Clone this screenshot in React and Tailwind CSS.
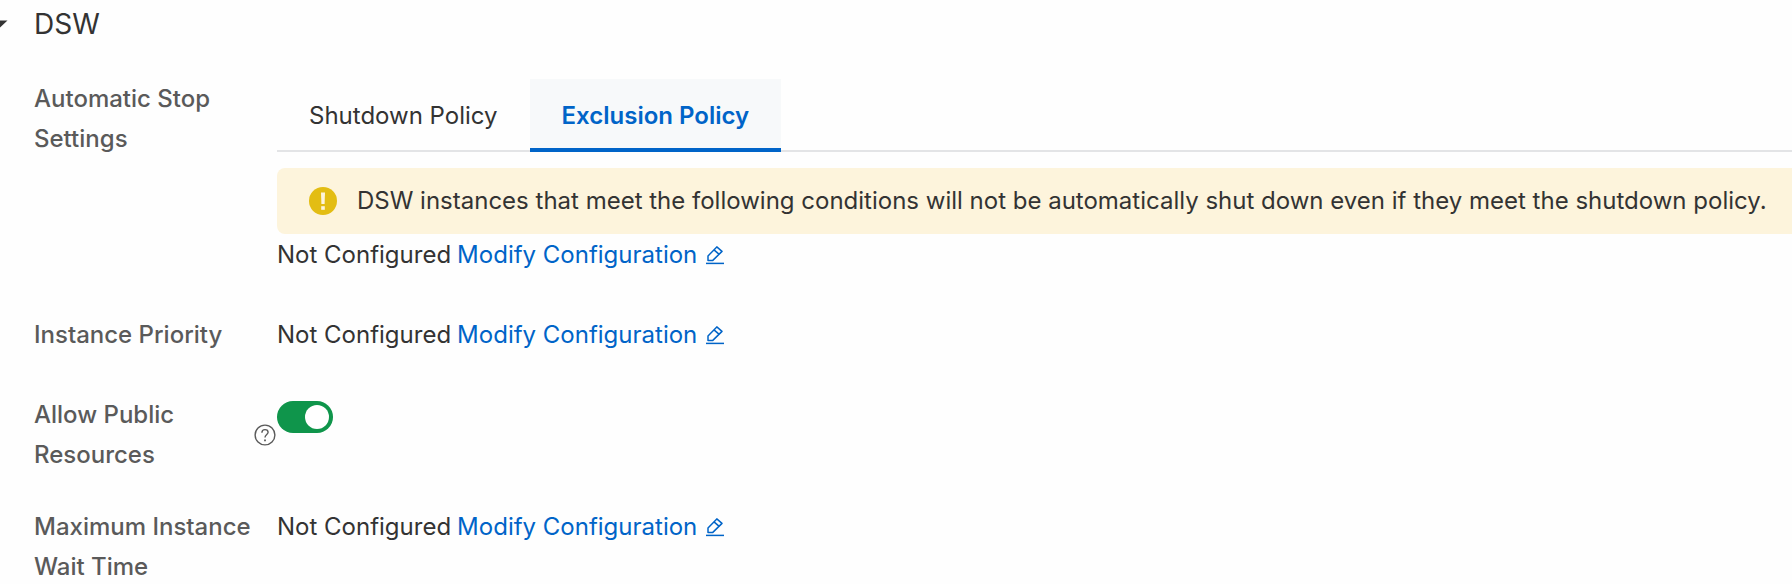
import React, { useState } from "react";

const EditIcon = () => (
  <svg
    viewBox="0 0 20 20"
    className="w-5 h-5"
    fill="none"
    stroke="currentColor"
    strokeWidth="1.5"
    aria-hidden="true"
  >
    <path d="M3 15.4V10.9L11.8 1.9L17 6.4L7.8 15.4Z" strokeLinejoin="round" />
    <path d="M9 4.9L14.2 9.4" />
    <path d="M1 18.4H19" />
  </svg>
);

const WarningIcon = () => (
  <svg viewBox="0 0 28 28" className="w-7 h-7 shrink-0" aria-hidden="true">
    <circle cx="14" cy="14" r="14" fill="#e3bd13" />
    <path d="M12 5.5H16L15.6 17H12.4Z" fill="#fdf4dc" />
    <rect x="12.2" y="19.2" width="3.6" height="3.6" fill="#fdf4dc" />
  </svg>
);

const HelpIcon = () => (
  <svg
    viewBox="0 0 22 22"
    className="w-[22px] h-[22px]"
    fill="none"
    stroke="currentColor"
    strokeWidth="1.4"
    aria-hidden="true"
  >
    <circle cx="11" cy="11" r="9.9" />
    <path d="M7.9 8.7C7.9 6.7 9.2 5.6 11 5.6C12.8 5.6 14.1 6.7 14.1 8.3C14.1 10.4 11 10.6 11 13.6" />
    <path d="M11 15.4V17.2" strokeWidth="1.8" />
  </svg>
);

const Row = ({ label, htmlFor, help, children }) => (
  <div className="flex">
    <div className="w-[243px] shrink-0 flex items-center justify-between self-start font-medium text-[#5a5a5a]">
      {htmlFor ? <label htmlFor={htmlFor}>{label}</label> : <span>{label}</span>}
      {help && (
        <button type="button" aria-label="Help" className="shrink-0 mr-px">
          <HelpIcon />
        </button>
      )}
    </div>
    <div className="flex-1 min-w-0 pb-2">{children}</div>
  </div>
);

const NotConfigured = () => (
  <div className="flex items-center gap-1.5">
    <span>Not Configured</span>
    <a href="#" className="flex items-center gap-2 text-[#0064c8]">
      Modify Configuration
      <EditIcon />
    </a>
  </div>
);

const tabs = [
  { id: "shutdown", label: "Shutdown Policy" },
  { id: "exclusion", label: "Exclusion Policy" },
];

const App = () => {
  const [activeTab, setActiveTab] = useState("exclusion");
  const [allowPublic, setAllowPublic] = useState(true);

  return (
    <main className="min-h-screen bg-[#fefefe] overflow-hidden font-['Inter',sans-serif] text-2xl leading-10 text-[#333]">
      <h2 className="flex items-center h-12">
        <button type="button" aria-label="Collapse DSW" className="w-[34px] shrink-0">
          <svg viewBox="0 0 8 8" className="w-2 h-2" fill="#333" aria-hidden="true">
            <path d="M0 0.5H7.5L0 7.5Z" />
          </svg>
        </button>
        <span className="text-[28px]">DSW</span>
      </h2>

      <div className="flex flex-col gap-8 pl-[34px] pt-[31px]">
        <Row label={<>Automatic Stop<br />Settings</>}>
          <div role="tablist" className="flex h-[73px] border-b-2 border-[#e3e4e6]">
            {tabs.map((tab) => (
              <button
                key={tab.id}
                type="button"
                role="tab"
                aria-selected={activeTab === tab.id}
                onClick={() => setActiveTab(tab.id)}
                className={
                  activeTab === tab.id
                    ? "h-[73px] px-8 shadow-[inset_0_-4px_#0064c8] bg-[#f7f9fa] font-semibold text-[#0064c8]"
                    : "h-[73px] px-8"
                }
              >
                {tab.label}
              </button>
            ))}
          </div>
          <div
            role="alert"
            className="mt-4 mb-px flex items-center gap-5 h-[66px] pl-8 rounded-l-lg bg-[#fdf4dc] whitespace-nowrap"
          >
            <WarningIcon />
            DSW instances that meet the following conditions will not be automatically shut down
            even if they meet the shutdown policy.
          </div>
          <NotConfigured />
        </Row>

        <Row label="Instance Priority">
          <NotConfigured />
        </Row>

        <Row label={<>Allow Public<br />Resources</>} htmlFor="allow-public" help>
          <label className="mt-1.5 flex w-14 h-8 p-1 rounded-full bg-gray-400 has-checked:bg-[#0f954b] has-checked:justify-end">
            <input
              id="allow-public"
              type="checkbox"
              checked={allowPublic}
              onChange={(e) => setAllowPublic(e.target.checked)}
              className="appearance-none w-6 h-6 rounded-full bg-white"
            />
          </label>
        </Row>

        <Row label={<>Maximum Instance<br />Wait Time</>}>
          <NotConfigured />
        </Row>
      </div>
    </main>
  );
};

export default App;
